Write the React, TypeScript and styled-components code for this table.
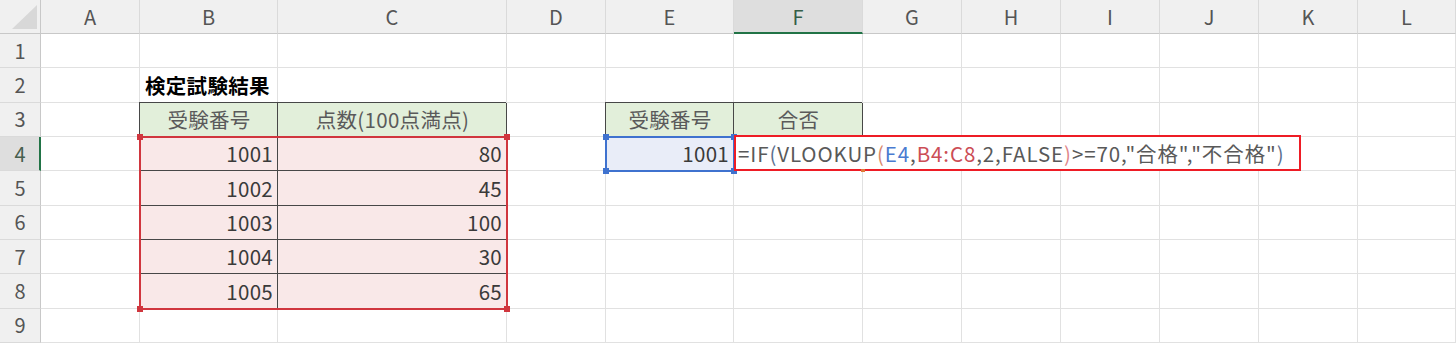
import React from "react";
import styled, { createGlobalStyle, css } from "styled-components";

const GlobalStyle = createGlobalStyle`
  html, body {
    margin: 0;
    padding: 0;
    background: #ffffff;
    overflow: hidden;
  }
  body {
    font-family: "Noto Sans CJK JP", "Noto Sans", sans-serif;
  }
`;

const COLUMNS = ["A", "B", "C", "D", "E", "F", "G", "H", "I", "J", "K", "L"];
const COLUMN_WIDTHS = [99, 138, 229, 99, 128, 129, 99, 99, 99, 99, 99, 98];
const ROWS = [1, 2, 3, 4, 5, 6, 7, 8, 9];

const HEAD_GREEN = "#e2efda";
const RANGE_PINK = "#f9e8e8";
const ACTIVE_BLUE = "#e9edf8";

type CellData = {
  text: string;
  align?: "left" | "center" | "right";
  fill?: string;
  boxed?: boolean;
  bold?: boolean;
  muted?: boolean;
};

const scores: [string, string][] = [
  ["1001", "80"],
  ["1002", "45"],
  ["1003", "100"],
  ["1004", "30"],
  ["1005", "65"],
];

const cells: Record<string, CellData> = {
  B2: { text: "検定試験結果", bold: true },
  B3: { text: "受験番号", align: "center", fill: HEAD_GREEN, boxed: true, muted: true },
  C3: { text: "点数(100点満点)", align: "center", fill: HEAD_GREEN, boxed: true, muted: true },
  E3: { text: "受験番号", align: "center", fill: HEAD_GREEN, boxed: true, muted: true },
  F3: { text: "合否", align: "center", fill: HEAD_GREEN, boxed: true, muted: true },
  E4: { text: "1001", align: "right", fill: ACTIVE_BLUE },
};

scores.forEach(([id, score], i) => {
  cells[`B${i + 4}`] = { text: id, align: "right", fill: RANGE_PINK, boxed: true };
  cells[`C${i + 4}`] = { text: score, align: "right", fill: RANGE_PINK, boxed: true };
});

// formula pieces and their reference colours while editing
const formula: { text: string; color?: string }[] = [
  { text: "=IF" },
  { text: "(", color: "#5b6f8f" },
  { text: "VLOOKUP" },
  { text: "(", color: "#d9876b" },
  { text: "E4", color: "#4a7bd0" },
  { text: "," },
  { text: "B4:C8", color: "#cc4d55" },
  { text: ",2,FALSE" },
  { text: ")", color: "#e0868a" },
  { text: '>=70,"合格","不合格"' },
  { text: ")", color: "#5b6f8f" },
];

const Sheet = styled.div`
  position: relative;
  display: grid;
  grid-template-columns: 41px ${COLUMN_WIDTHS.map((w) => `${w}px`).join(" ")};
  grid-template-rows: 34px repeat(${ROWS.length}, 34.33px);
  width: 1456px;
  height: 343px;
  overflow: hidden;
  font-family: "Noto Sans CJK JP", "Noto Sans", sans-serif;
`;

const headerBase = css`
  display: flex;
  align-items: center;
  justify-content: center;
  box-sizing: border-box;
  background: #f0f0f0;
  color: #555555;
  font-size: 20px;
  line-height: 1;
`;

const Corner = styled.div`
  ${headerBase};
  align-items: flex-end;
  justify-content: flex-end;
  padding: 0 3px 4px 0;
  border-right: 1px solid #c8c8c8;
  border-bottom: 1px solid #c8c8c8;
`;

const ColHeader = styled.div<{ $active?: boolean }>`
  ${headerBase};
  border-right: 1px solid #dadada;
  border-bottom: ${({ $active }) => ($active ? "2px solid #217346" : "1px solid #c8c8c8")};
  background: ${({ $active }) => ($active ? "#dedede" : "#f0f0f0")};
  color: ${({ $active }) => ($active ? "#355e48" : "#555555")};
  padding-top: ${({ $active }) => ($active ? "1px" : "0")};
`;

const RowHeader = styled.div<{ $active?: boolean }>`
  ${headerBase};
  border-bottom: 1px solid #dadada;
  border-right: ${({ $active }) => ($active ? "2px solid #217346" : "1px solid #c8c8c8")};
  background: ${({ $active }) => ($active ? "#dedede" : "#f0f0f0")};
  color: ${({ $active }) => ($active ? "#47604f" : "#555555")};
  padding-left: ${({ $active }) => ($active ? "1px" : "0")};
`;

const Cell = styled.div<{
  $fill?: string;
  $boxed?: boolean;
  $align?: "left" | "center" | "right";
  $bold?: boolean;
  $muted?: boolean;
}>`
  position: relative;
  display: flex;
  align-items: center;
  justify-content: ${({ $align }) =>
    $align === "right" ? "flex-end" : $align === "center" ? "center" : "flex-start"};
  box-sizing: border-box;
  padding: 0 4px 0 5px;
  white-space: nowrap;
  background: ${({ $fill }) => $fill ?? "#ffffff"};
  border-right: 1px solid ${({ $boxed }) => ($boxed ? "#474747" : "#e1e1e1")};
  border-bottom: 1px solid ${({ $boxed }) => ($boxed ? "#474747" : "#e1e1e1")};
  ${({ $boxed }) =>
    $boxed &&
    css`
      box-shadow: -1px -1px 0 0 #474747;
    `}
  font-size: 20.5px;
  letter-spacing: 0.3px;
  font-weight: ${({ $bold }) => ($bold ? 700 : 400)};
  color: ${({ $bold, $muted }) => ($bold ? "#000000" : $muted ? "#5a5a5a" : "#3a3a3a")};
  line-height: 1;
`;

const SelectionBox = styled.div<{ $cols: string; $rows: string; $color: string }>`
  position: absolute;
  grid-column: ${({ $cols }) => $cols};
  grid-row: ${({ $rows }) => $rows};
  inset: -1px -1px -1px -1px;
  border: 2px solid ${({ $color }) => $color};
  pointer-events: none;
  z-index: 2;
`;

const Handle = styled.span<{ $x: "left" | "right"; $y: "top" | "bottom"; $color: string }>`
  position: absolute;
  width: 6px;
  height: 6px;
  background: ${({ $color }) => $color};
  ${({ $x }) => ($x === "left" ? "left: -4px;" : "right: -4px;")}
  ${({ $y }) => ($y === "top" ? "top: -4px;" : "bottom: -4px;")}
`;

const Editor = styled.div`
  position: absolute;
  grid-column: 7 / 8;
  grid-row: 5 / 6;
  left: 0;
  top: -2px;
  width: 567px;
  height: calc(100% + 2px);
  box-sizing: border-box;
  display: flex;
  align-items: center;
  padding: 0 0 0 2px;
  background: #ffffff;
  border: 2px solid #ee1c25;
  z-index: 3;
  white-space: nowrap;
  font-size: 20.5px;
  letter-spacing: 0.9px;
  color: #595959;
  line-height: 1;
`;

const Token = styled.span<{ $color?: string }>`
  color: ${({ $color }) => $color ?? "inherit"};
`;

const FillMark = styled.span`
  position: absolute;
  left: 125px;
  bottom: -3px;
  width: 4px;
  height: 3px;
  background: #e07b39;
`;

const corners: ["left" | "right", "top" | "bottom"][] = [
  ["left", "top"],
  ["right", "top"],
  ["left", "bottom"],
  ["right", "bottom"],
];

const App = () => {
  return (
    <>
      <GlobalStyle />
      <Sheet>
        <Corner>
          <svg width="25" height="24" viewBox="0 0 25 24">
            <polygon points="25,0 25,24 0,24" fill="#d8d8d8" />
          </svg>
        </Corner>
        {COLUMNS.map((col) => (
          <ColHeader key={col} $active={col === "F"}>
            {col}
          </ColHeader>
        ))}
        {ROWS.map((row) => (
          <React.Fragment key={row}>
            <RowHeader $active={row === 4}>{row}</RowHeader>
            {COLUMNS.map((col) => {
              const data = cells[`${col}${row}`];
              return (
                <Cell
                  key={`${col}${row}`}
                  $fill={data?.fill}
                  $boxed={data?.boxed}
                  $align={data?.align}
                  $bold={data?.bold}
                  $muted={data?.muted}
                >
                  {data?.text}
                </Cell>
              );
            })}
          </React.Fragment>
        ))}

        <SelectionBox $cols="3 / 5" $rows="5 / 10" $color="#d0363e">
          {corners.map(([x, y]) => (
            <Handle key={x + y} $x={x} $y={y} $color="#d0363e" />
          ))}
        </SelectionBox>

        <SelectionBox $cols="6 / 7" $rows="5 / 6" $color="#3f72cf">
          {corners.map(([x, y]) => (
            <Handle key={x + y} $x={x} $y={y} $color="#3f72cf" />
          ))}
        </SelectionBox>

        <Editor>
          {formula.map((part, i) => (
            <Token key={i} $color={part.color}>
              {part.text}
            </Token>
          ))}
          <FillMark />
        </Editor>
      </Sheet>
    </>
  );
};

export default App;
